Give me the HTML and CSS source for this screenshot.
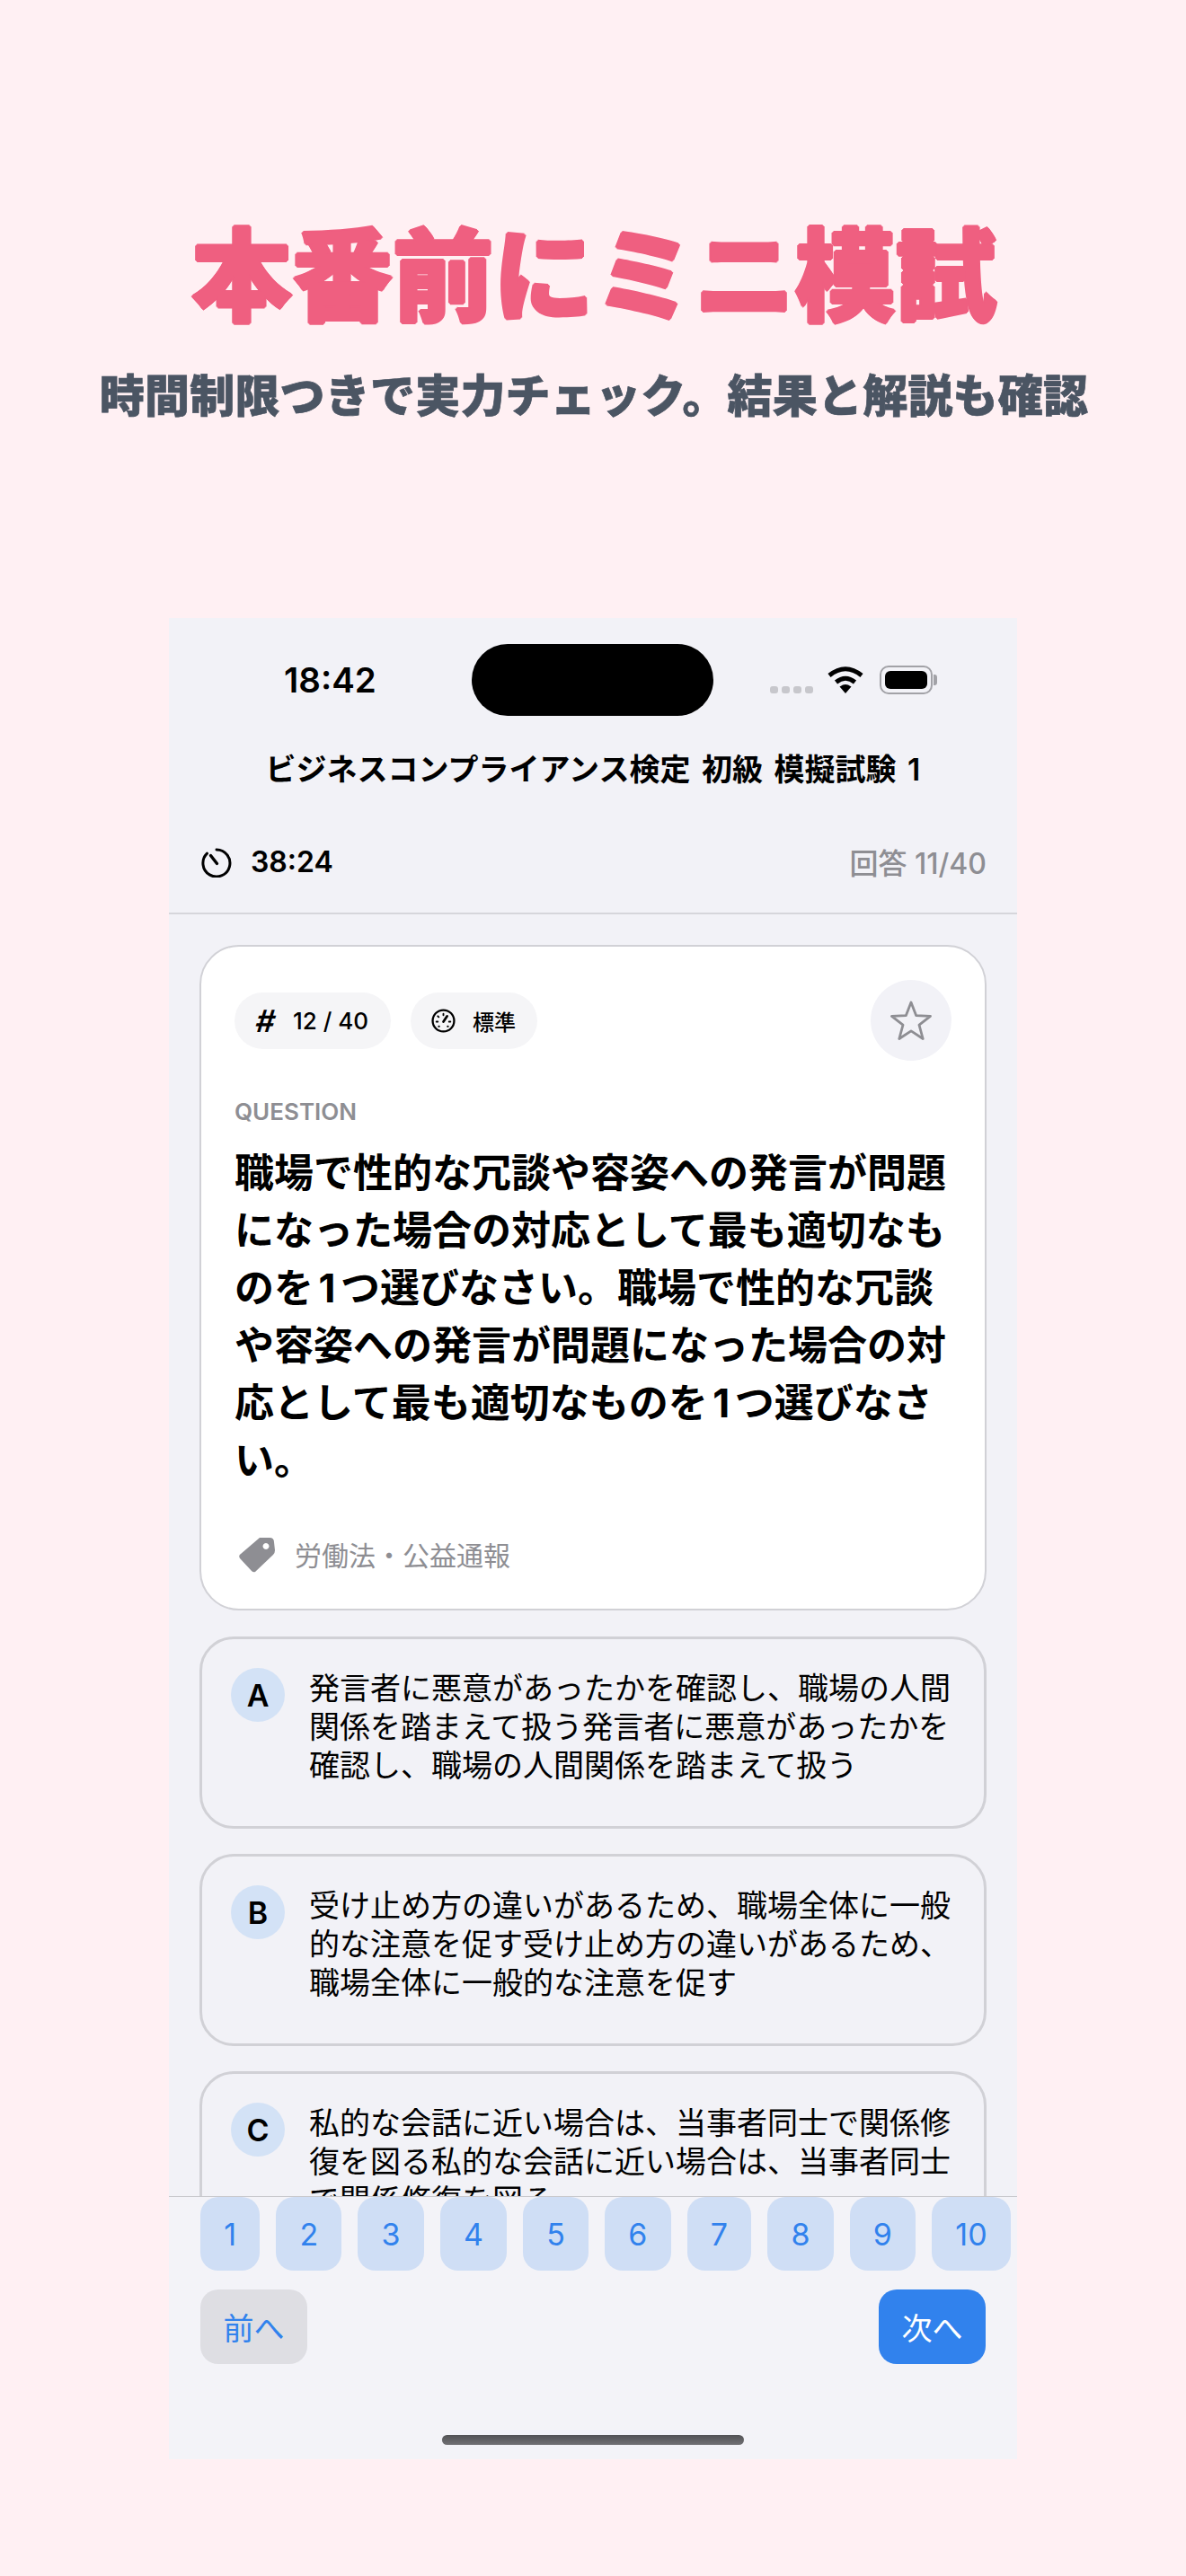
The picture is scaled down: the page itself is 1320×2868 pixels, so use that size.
FILE: index.html
```html
<!DOCTYPE html>
<html lang="ja">
<head>
  <meta charset="UTF-8">
  <meta name="viewport" content="width=device-width, initial-scale=1.0">
  <title>本番前にミニ模試</title>
  <link rel="stylesheet" href="styles.css">
</head>
<body>
  <header class="hero">
    <h1>本番前にミニ模試</h1>
    <p>時間制限つきで実力チェック。結果と解説も確認</p>
  </header>

  <div class="phone">
    <div class="status">
      <span class="time">18:42</span>
      <div class="island"></div>
      <div class="status-icons">
        <span class="dots"><i></i><i></i><i></i><i></i></span>
        <svg class="wifi" viewBox="0 0 42 30" width="42" height="30">
          <path d="M21 30 L14.5 22.5 Q21 17.5 27.5 22.5 Z" fill="#000"/>
          <path d="M10.5 17.5 Q21 9 31.5 17.5" fill="none" stroke="#000" stroke-width="5"/>
          <path d="M3 10 Q21 -4.5 39 10" fill="none" stroke="#000" stroke-width="5"/>
        </svg>
        <span class="battery"><i></i></span>
      </div>
    </div>

    <div class="nav-title">ビジネスコンプライアンス検定 初級 模擬試験 1</div>

    <div class="timer-row">
      <div class="timer">
        <svg viewBox="0 0 34 34" width="34" height="34">
          <path d="M17 3 A15 15 0 1 1 6.5 7.2" fill="none" stroke="#000" stroke-width="3" stroke-linecap="round"/>
          <path d="M10.5 9.5 L17.5 18.5" fill="none" stroke="#000" stroke-width="3.4" stroke-linecap="round"/>
        </svg>
        <span>38:24</span>
      </div>
      <span class="answered">回答 11/40</span>
    </div>

    <main class="scroll">
      <section class="card">
        <div class="card-head">
          <span class="pill"><b class="hash">#</b>12 / 40</span>
          <span class="pill pill-level">
            <svg viewBox="0 0 26 26" width="27" height="27">
              <circle cx="13" cy="13" r="11.5" fill="none" stroke="#000" stroke-width="2.2"/>
              <path d="M13 14 L17 8" stroke="#000" stroke-width="2.6" stroke-linecap="round"/>
              <path d="M13 5.5v1.5M7 8l1 1M5.5 14h1.5M19 14h1.5M8 19h.5M18 19h-.5" stroke="#000" stroke-width="1.8" stroke-linecap="round"/>
            </svg>
            標準
          </span>
          <button class="star">
            <svg viewBox="0 0 48 46" width="48" height="46">
              <path d="M24 3 L29.6 17.6 L45.5 18.4 L33 28.2 L37.2 43.5 L24 34.8 L10.8 43.5 L15 28.2 L2.5 18.4 L18.4 17.6 Z" fill="none" stroke="#8e8e93" stroke-width="2.8" stroke-linejoin="round"/>
            </svg>
          </button>
        </div>
        <div class="label">QUESTION</div>
        <h2 class="question">職場で性的な冗談や容姿への発言が問題になった場合の対応として最も適切なものを1つ選びなさい。職場で性的な冗談や容姿への発言が問題になった場合の対応として最も適切なものを1つ選びなさい。</h2>
        <div class="tag">
          <svg viewBox="0 0 42 40" width="42" height="40">
            <path d="M24 1 H35 Q40 1 40 6 L41 15 Q41 18 39 20 L19 39 Q17 40 15 38 L2 24 Q0 21 3 19 Z M31 7 A3.5 3.5 0 1 0 31.01 7 Z" fill="#8e8e93" fill-rule="evenodd"/>
          </svg>
          <span>労働法・公益通報</span>
        </div>
      </section>

      <div class="option">
        <span class="badge">A</span>
        <p>発言者に悪意があったかを確認し、職場の人間関係を踏まえて扱う発言者に悪意があったかを確認し、職場の人間関係を踏まえて扱う</p>
      </div>
      <div class="option">
        <span class="badge">B</span>
        <p>受け止め方の違いがあるため、職場全体に一般的な注意を促す受け止め方の違いがあるため、職場全体に一般的な注意を促す</p>
      </div>
      <div class="option">
        <span class="badge">C</span>
        <p>私的な会話に近い場合は、当事者同士で関係修復を図る私的な会話に近い場合は、当事者同士で関係修復を図る</p>
      </div>
    </main>

    <footer class="bottom">
      <div class="numbers">
        <button>1</button>
        <button>2</button>
        <button>3</button>
        <button>4</button>
        <button>5</button>
        <button>6</button>
        <button>7</button>
        <button>8</button>
        <button>9</button>
        <button>10</button>
      </div>
      <div class="pager">
        <button class="prev">前へ</button>
        <button class="next">次へ</button>
      </div>
      <div class="home-bar"></div>
    </footer>
  </div>
</body>
</html>
```

FILE: styles.css
```css
* {
  box-sizing: border-box;
}

body {
  margin: 0;
  height: 2868px;
  overflow: hidden;
  background: #fff0f3;
  font-family: Inter, "Noto Sans CJK JP", sans-serif;
  color: #000;
}

button {
  font-family: inherit;
  border: none;
}

.hero {
  padding: 235px 0 0 2px;
  text-align: center;
}

.hero h1 {
  margin: 0;
  font-family: "Noto Sans CJK JP", sans-serif;
  font-size: 112px;
  line-height: 130px;
  font-weight: 900;
  color: #ef5f80;
  /* ring of shadows, rounds the corners of the glyphs */
  text-shadow:
    2px 0 #ef5f80, -2px 0 #ef5f80, 0 2px #ef5f80, 0 -2px #ef5f80,
    1px 1px #ef5f80, -1px 1px #ef5f80, 1px -1px #ef5f80, -1px -1px #ef5f80;
}

.hero p {
  margin: 42px 0 0;
  font-family: "Noto Sans CJK JP", sans-serif;
  font-size: 50px;
  letter-spacing: 0.2px;
  line-height: 60px;
  font-weight: 900;
  color: #4b5563;
  -webkit-text-stroke: 0.7px #4b5563;
}

.phone {
  width: 944px;
  height: 2050px;
  margin: 221px auto 0;
  background: #f2f2f7;
  display: flex;
  flex-direction: column;
}

.status {
  display: grid;
  grid-template-columns: 337px 269px 338px;
  align-items: center;
  height: 138px;
  flex-shrink: 0;
}

.time {
  padding-left: 128px;
  font-size: 38.5px;
  font-weight: 600;
}

.island {
  height: 80px;
  background: #000;
  border-radius: 40px;
}

.status-icons {
  display: flex;
  align-items: center;
  justify-content: flex-end;
  padding-right: 94px;
}

.dots {
  display: flex;
  gap: 4px;
  margin-top: 22px;
  margin-right: 15px;
}

.dots i {
  width: 9px;
  height: 8px;
  border-radius: 3px;
  background: #c7c7cc;
}

.wifi {
  margin-right: 17px;
}

.battery {
  position: relative;
  width: 59px;
  height: 32px;
  padding: 4px;
  border: 2px solid #a2a2a7;
  border-radius: 10px;
}

.battery i {
  display: block;
  height: 100%;
  background: #000;
  border-radius: 6px;
}

.battery::after {
  content: "";
  position: absolute;
  top: 8px;
  right: -7px;
  width: 4px;
  height: 12px;
  background: #a2a2a7;
  border-radius: 0 3px 3px 0;
}

.nav-title {
  height: 62px;
  flex-shrink: 0;
  font-size: 34px;
  word-spacing: 4px;
  line-height: 62px;
  font-weight: 600;
  text-align: center;
}

.timer-row {
  display: flex;
  align-items: center;
  justify-content: space-between;
  height: 130px;
  flex-shrink: 0;
  padding: 15px 34px 0 36px;
  border-bottom: 2px solid #d6d6db;
}

.timer {
  display: flex;
  align-items: center;
  gap: 21px;
  font-size: 32px;
  font-weight: 600;
}

.answered {
  margin-top: -2px;
  font-size: 32px;
  font-weight: 500;
  color: #8e8e93;
}

.scroll {
  flex: 1;
  min-height: 0;
  overflow: hidden;
  padding: 34px 34px 0;
}

.card {
  background: #fff;
  border: 2px solid #d1d1d6;
  border-radius: 44px;
  padding: 37px 37px 40px;
}

.card-head {
  display: flex;
  align-items: center;
  gap: 22px;
  height: 90px;
}

.pill {
  display: flex;
  align-items: center;
  gap: 19px;
  height: 63px;
  padding: 0 25px 0 24px;
  border-radius: 32px;
  background: #f5f5f7;
  font-size: 26px;
  font-weight: 500;
}

.pill-level {
  padding: 0 24px 0 23px;
  font-size: 24px;
}

.hash {
  font-size: 34px;
  font-weight: 600;
  transform: skewX(-8deg);
}

.star {
  display: flex;
  align-items: center;
  justify-content: center;
  width: 90px;
  height: 90px;
  margin-left: auto;
  padding: 0;
  border-radius: 50%;
  background: #f2f2f7;
}

.label {
  margin-top: 41px;
  font-size: 26px;
  line-height: 32px;
  font-weight: 600;
  color: #8e8e93;
}

.question {
  margin: 20px 0 0;
  font-size: 44px;
  line-height: 64px;
  font-weight: 700;
  text-autospace: normal;
}

.tag {
  display: flex;
  align-items: center;
  gap: 21px;
  height: 40px;
  margin-top: 53px;
  padding-left: 4px;
  font-size: 30px;
  font-weight: 400;
  color: #8e8e93;
}

.tag span {
  margin-top: -3px;
}

.option {
  display: flex;
  gap: 27px;
  height: 214px;
  margin-top: 29px;
  padding: 32px;
  border: 3px solid #d1d1d6;
  border-radius: 38px;
}

.option + .option {
  margin-top: 28px;
}

.badge {
  display: flex;
  align-items: center;
  justify-content: center;
  flex-shrink: 0;
  width: 60px;
  height: 60px;
  border-radius: 50%;
  background: #d3e2f6;
  font-size: 34px;
  font-weight: 600;
}

.option p {
  margin: 1px 0 0;
  font-size: 34px;
  line-height: 43px;
}

.bottom {
  flex-shrink: 0;
  border-top: 1px solid #c8c8cc;
  background: #f3f3f8;
}

.numbers {
  display: flex;
  gap: 18px;
  padding-left: 35px;
}

.numbers button {
  height: 82px;
  padding: 0 26.2px;
  border-radius: 20px;
  background: #cfdef5;
  color: #3182ed;
  font-size: 34px;
}

.pager {
  display: flex;
  justify-content: space-between;
  margin-top: 21px;
  padding: 0 35px;
}

.pager button {
  width: 119px;
  height: 83px;
  padding: 0;
  border-radius: 20px;
  font-size: 34px;
}

.prev {
  background: #dedee3;
  color: #3182ed;
}

.next {
  background: #3182ed;
  color: #fff;
}

.home-bar {
  width: 336px;
  height: 11px;
  margin: 79px auto 16px;
  border-radius: 6px;
  background: linear-gradient(#525255, #707074);
}
```
